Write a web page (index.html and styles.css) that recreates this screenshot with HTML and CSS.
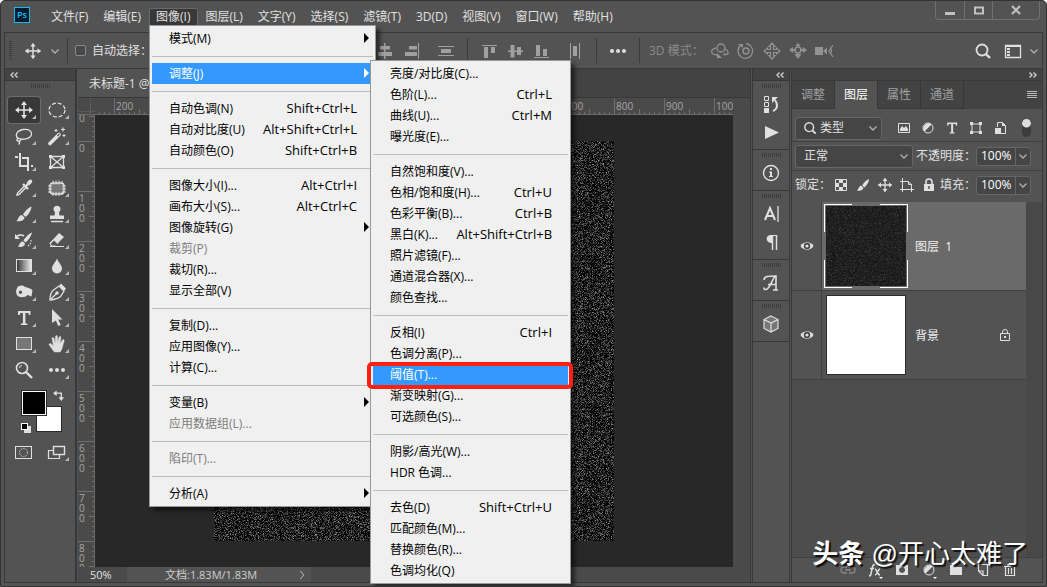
FILE: index.html
```html
<!DOCTYPE html>
<html lang="zh-CN">
<head>
  <meta charset="UTF-8" />
  <title>未标题-1</title>
  <link rel="stylesheet" href="styles.css">
</head>
<body>

  <!-- Icon sprite -->
  <svg class="sprite" aria-hidden="true">
    <symbol id="i-move" viewBox="0 0 20 20"><path d="M10 2v16M2 10h16" stroke="currentColor" stroke-width="1.6"/><path d="M10 1l3 4H7zM10 19l3-4H7zM1 10l4-3v6zM19 10l-4-3v6z" fill="currentColor"/></symbol>
    <symbol id="i-chev" viewBox="0 0 10 10"><path d="M1.500 3.500L5 7l3.500-3.500" fill="none" stroke="currentColor" stroke-width="1.300"/></symbol>
    <symbol id="i-marquee" viewBox="0 0 20 20"><ellipse cx="10" cy="10" rx="8" ry="7" fill="none" stroke="currentColor" stroke-width="1.3" stroke-dasharray="4 2"/></symbol>
    <symbol id="i-lasso" viewBox="0 0 20 20"><path d="M5.500 13C0 10.500 2 5 9 3.500c6-1 9 2 8.500 4.800C17 12 10 14.500 5 12.500c-2-.5-3 2-1 2.500s4-1 2-2.500M5 15c1 1 .5 2.500-.5 3.500" fill="none" stroke="currentColor" stroke-width="1.300"/></symbol>
    <symbol id="i-wand" viewBox="0 0 20 20"><path d="M3 17.500L12 8.500" stroke="currentColor" stroke-width="3.600" stroke-linecap="round"/><path d="M10.500 10l2-2" stroke="#535353" stroke-width="1.200"/><path d="M9 3v3M7.500 4.500h3M16 1.500v4M14 3.500h4M17 8v3M15.500 9.500h3" stroke="currentColor" stroke-width="1.100"/></symbol>
    <symbol id="i-crop" viewBox="0 0 20 20"><path d="M6 1v13h9M1 5h3M8 6h6v7M14 15v4M17 14h2" fill="none" stroke="currentColor" stroke-width="2"/></symbol>
    <symbol id="i-frame" viewBox="0 0 20 20"><path d="M3.500 4.500h13v11h-13zM3.500 4.500l13 11M16.500 4.500l-13 11" fill="none" stroke="currentColor" stroke-width="1.300"/><path d="M2 3h3v3H2zM15 3h3v3h-3zM2 14h3v3H2zM15 14h3v3h-3z" fill="currentColor"/></symbol>
    <symbol id="i-dropper" viewBox="0 0 20 20"><path d="M11 7.500l-7.500 7.500-.5 2 2-.5L12.500 9" fill="none" stroke="currentColor" stroke-width="1.400"/><path d="M9 6l5 5M12 8l4-4" stroke="currentColor" stroke-width="2.400"/><path d="M12.500 5l2.500-3c2-1.500 4 .5 3 2.500l-3 3z" fill="currentColor"/></symbol>
    <symbol id="i-patch" viewBox="0 0 20 20"><rect x="3" y="5" width="14" height="11" rx="3" fill="#777" stroke="currentColor" stroke-width="1.300"/><path d="M6 2.500v4M9 2.500v4M12 2.500v4M15 3v3M6 14v4M9 14v4M12 14v4M15 14v3M1 8h4M1 11h4M1 14h4M15 8h4M15 11h4M15 14h4" stroke="currentColor"/></symbol>
    <symbol id="i-brush" viewBox="0 0 20 20"><path d="M17.500 2.500c-3 1-7 5-8.500 8l2.500 2.500c3-2 6-7 6-10.500z" fill="currentColor"/><path d="M8 11c-3 0-3 3-5.500 6 3.500 1 8-.5 8-3.500z" fill="currentColor"/></symbol>
    <symbol id="i-stamp" viewBox="0 0 20 20"><path d="M8 8a3.500 3.500 0 1 1 4 0l.5 3.500H17v3.500H3v-3.500h4.500z" fill="currentColor"/><path d="M4 17.500h12" stroke="currentColor" stroke-width="1.500"/></symbol>
    <symbol id="i-history" viewBox="0 0 20 20"><path d="M18 2.500c-3 1-7 5-8.500 8l2 2c3-2 6-7 6.500-10zM9 11.500c-3 0-3 2.500-5 5 3 1 7 0 7-3z" fill="currentColor"/><path d="M2 8c1-3 5-4 8-2" fill="none" stroke="currentColor" stroke-width="1.600"/><path d="M1 4v5h5z" fill="currentColor"/><path d="M14 16c2-1 3-3 3-6" fill="none" stroke="currentColor" stroke-width="1.200" stroke-dasharray="1.300 1.500"/></symbol>
    <symbol id="i-eraser" viewBox="0 0 20 20"><path d="M12 3l5 4-9 9H4l-1.500-2.500z" fill="currentColor"/><path d="M7 9.500l4 4-2 2H5l-1.500-2z" fill="#535353"/><path d="M7 9.500l4 4M3 13.500l4-4M3 16.500h14" stroke="currentColor" stroke-width="1.200"/></symbol>
    <symbol id="i-grad" viewBox="0 0 20 20"><rect x="2.500" y="3.500" width="15" height="12" fill="url(#gradFill)" stroke="currentColor"/></symbol>
    <symbol id="i-drop" viewBox="0 0 20 20"><path d="M10 2.500c1 3.500 5 6.500 5 10a5 5 0 0 1-10 0c0-3.500 4-6.500 5-10z" fill="currentColor"/></symbol>
    <symbol id="i-dodge" viewBox="0 0 20 20"><path fill-rule="evenodd" d="M3 6c2-3 6-3 8-1 3 1 6 1 7.500 3.500l-1 6-4-1.500C11 16 5 16 3 13c-1.500-2-1-5 0-7zm3 2.500c-2 1-1 3.500.5 3.500S9.500 9 6 8.500z" fill="currentColor"/></symbol>
    <symbol id="i-pen" viewBox="0 0 20 20"><path d="M3 18c0-5 1-8 3.500-10L12 4l5 5-3.500 5.500C11 17 8 17.500 3 18zM4 17l5.500-5.500" fill="none" stroke="currentColor" stroke-width="1.300"/><circle cx="10" cy="11" r="1.700" fill="currentColor"/><path d="M12 4l2-2.500 5 5L17 9z" fill="currentColor"/></symbol>
    <symbol id="i-type" viewBox="0 0 20 20"><path d="M4 3h12.500v4h-1.600l-.6-2H11.400v10.300l2 .5V17H6.900v-1.200l2-.5V5H6.200l-.6 2H4z" fill="currentColor"/></symbol>
    <symbol id="i-arrow" viewBox="0 0 20 20"><path d="M5 1l10.500 10.500h-4.300l2.500 5.500-2.400 1-2.500-5.500L5 15z" fill="currentColor"/></symbol>
    <symbol id="i-rect" viewBox="0 0 20 20"><rect x="2.500" y="3.500" width="15" height="12" fill="#777" stroke="currentColor"/></symbol>
    <symbol id="i-hand" viewBox="0 0 20 20"><path d="M7.500 18C5.500 16 3.500 12.500 2 10.500c.5-1.500 2-1 3 .2L6.500 12 5 4.500c0-1.200 1.500-1.200 1.900 0L8.200 9.500 8.500 2.500c.2-1.300 1.800-1.300 1.900 0l.2 7 1.500-6.300c.4-1.200 2-1 1.800.4L13 10l2.500-4c.8-1 2-.2 1.600 1L15 14.500c-.5 1.500-1 2.500-2 3.500z" fill="currentColor" stroke="currentColor" stroke-width=".5"/></symbol>
    <symbol id="i-zoom" viewBox="0 0 20 20"><circle cx="8" cy="8" r="5.500" fill="none" stroke="currentColor" stroke-width="1.600"/><path d="M5.500 8a2.500 2.500 0 0 1 2.500-2.500" fill="none" stroke="currentColor"/><path d="M12 12l6 6" stroke="currentColor" stroke-width="2.400"/></symbol>
    <symbol id="i-dots" viewBox="0 0 20 20"><circle cx="4" cy="10" r="2" fill="currentColor"/><circle cx="10" cy="10" r="2" fill="currentColor"/><circle cx="16" cy="10" r="2" fill="currentColor"/></symbol>
    <symbol id="i-mask" viewBox="0 0 20 20"><rect x="1.500" y="4.500" width="16" height="12" fill="none" stroke="currentColor"/><circle cx="9.500" cy="10.500" r="4" fill="none" stroke="currentColor" stroke-dasharray="1.300 1.300"/></symbol>
    <symbol id="i-screens" viewBox="0 0 20 20"><path d="M6 8.500H1.500v8h11V13" fill="none" stroke="currentColor" stroke-width="1.200"/><rect x="6.500" y="4.500" width="11" height="8" fill="none" stroke="currentColor" stroke-width="1.400"/></symbol>
    <symbol id="i-swap" viewBox="0 0 12 12"><path d="M3 3.500h6V9" fill="none" stroke="currentColor" stroke-width="1.400"/><path d="M0 3.500L4 .5v6zM9 12L6 8h6z" fill="currentColor"/></symbol>
    <symbol id="i-alc" viewBox="0 0 20 20"><path d="M8 2h1.500v3H14v3.500H9.500V11H16v4H9.500v3H8v-3H2v-4h6V8.500H4V5h4z" fill="currentColor"/></symbol>
    <symbol id="i-alr" viewBox="0 0 20 20"><path d="M7 5h8v3.500H7zM3 11h12v4H3zM16 2h1v16h-1z" fill="currentColor"/></symbol>
    <symbol id="i-dist" viewBox="0 0 20 20"><path d="M2 5h16v1H2zM5 8h10v4H5zM2 14h16v1H2z" fill="currentColor"/></symbol>
    <symbol id="i-top" viewBox="0 0 20 20"><path d="M3 4h15v1H3zM5 6h4v11H5zM12 6h4v6h-4z" fill="currentColor"/></symbol>
    <symbol id="i-mid" viewBox="0 0 20 20"><path d="M3 9.500h2.500V4h4v5.500H12V6h4v3.500h2V11h-2v3h-4v-3H9.500v5.500h-4V11H3z" fill="currentColor"/></symbol>
    <symbol id="i-bot" viewBox="0 0 20 20"><path d="M5 4h4v11H5zM12 8h4v7h-4zM3 16h15v1H3z" fill="currentColor"/></symbol>
    <symbol id="i-disth" viewBox="0 0 20 20"><path d="M5 2h1v16H5zM8 5h4v10H8zM14 2h1v16h-1z" fill="currentColor"/></symbol>
    <symbol id="i-orbit" viewBox="0 0 20 20"><circle cx="11" cy="7" r="4" fill="none" stroke="currentColor" stroke-width="1.300"/><path d="M6 7c-4 1-5 3-4 5 1 1.500 3 2 6 2M15 8c4 2 4 5 1 5.500h-3" fill="none" stroke="currentColor" stroke-width="1.300"/><path d="M7 12v5h5z" fill="currentColor"/></symbol>
    <symbol id="i-roll" viewBox="0 0 20 20"><circle cx="10" cy="10" r="3" fill="none" stroke="currentColor" stroke-width="1.400"/><path d="M4.500 4.500A7.300 7.300 0 1 0 10 2.700" fill="none" stroke="currentColor" stroke-width="1.200"/><path d="M2 3h5v4z" fill="currentColor"/></symbol>
    <symbol id="i-pan" viewBox="0 0 20 20"><path d="M10 2l3 3.500h-1.500v3h3V7L18 10l-3.500 3v-1.500h-3v3H13L10 18l-3-3.500h1.500v-3h-3V13L2 10l3.500-3v1.500h3v-3H7z" fill="none" stroke="currentColor" stroke-width="1.200"/></symbol>
    <symbol id="i-slide" viewBox="0 0 20 20"><circle cx="10" cy="9" r="3" fill="none" stroke="currentColor" stroke-width="1.500"/><path d="M10 2l2.500 3h-5zM10 18l3.500-5h-7zM1 9l4-3v2h2v2H5v2zM19 9l-4-3v2h-2v2h2v2z" fill="currentColor"/></symbol>
    <symbol id="i-cam" viewBox="0 0 20 20"><path d="M1 6h8v8H1zM9 10l4-3.500v7z" fill="currentColor"/><path d="M19 4l-4 6 4 6M16 7c2 1 2 5 0 6" fill="none" stroke="currentColor" stroke-width="1.200"/></symbol>
    <symbol id="i-search" viewBox="0 0 20 20"><circle cx="9" cy="9" r="5.500" fill="none" stroke="currentColor" stroke-width="1.800"/><path d="M13 13l4 4" stroke="currentColor" stroke-width="2.400"/></symbol>
    <symbol id="i-work" viewBox="0 0 20 20"><path d="M2.500 4.500h15v12h-15z" fill="none" stroke="currentColor" stroke-width="1.300"/><path d="M2 4h16v2H2zM4 7h3v2H4zM4 10h3v2H4zM4 13h3v2H4z" fill="currentColor"/></symbol>
    <symbol id="i-hist" viewBox="0 0 20 20"><path d="M3.500 2.500h4v4h-4zM3.500 8.500h4v4h-4z" fill="none" stroke="currentColor"/><path d="M3 14h5v5H3z" fill="currentColor"/><path d="M12 17c5-2 5-7 2-11" fill="none" stroke="currentColor" stroke-width="2"/><path d="M11 9V3h6z" fill="currentColor"/></symbol>
    <symbol id="i-play" viewBox="0 0 20 20"><path d="M4 4l14 6.500L4 17z" fill="currentColor"/></symbol>
    <symbol id="i-info" viewBox="0 0 20 20"><circle cx="10" cy="10" r="7.500" fill="none" stroke="currentColor" stroke-width="1.400"/><path d="M9 5h2v2H9zM8 8.500h3V13h1v1H8v-1h1V9.500H8z" fill="currentColor"/></symbol>
    <symbol id="i-char" viewBox="0 0 20 20"><path d="M4 16L9 4l5 12M6 12h6" fill="none" stroke="currentColor" stroke-width="2"/><path d="M17 2v16" stroke="currentColor" stroke-width="1.300"/></symbol>
    <symbol id="i-para" viewBox="0 0 20 20"><path d="M16 3.500H9" stroke="currentColor"/><path d="M11 3v8C4 11 4 3 10 3z" fill="currentColor"/><path d="M11.500 3v15M15.500 3v15" stroke="currentColor" stroke-width="1.500"/></symbol>
    <symbol id="i-glyph" viewBox="0 0 20 20"><path d="M3 7c0-4 5-4 12-4v14M14.500 3C11 6 9 16 5 16.500c-2 .3-2-1-2-2M7 11.500h8M12 17h5" fill="none" stroke="currentColor" stroke-width="1.600"/></symbol>
    <symbol id="i-cube" viewBox="0 0 20 20"><path d="M10 2l7 3.500v9L10 18l-7-3.500v-9z" fill="#777"/><path d="M10 2l7 3.500v9L10 18l-7-3.500v-9zM3 5.500L10 9l7-3.500M10 9v9" fill="none" stroke="currentColor" stroke-width="1.200"/></symbol>
    <symbol id="i-image" viewBox="0 0 16 16"><path d="M2.500 3.500h11v9h-11z" fill="none" stroke="currentColor"/><path d="M4 11V9l2-3 2 2 2-2 2 3v2z" fill="currentColor"/></symbol>
    <symbol id="i-adj" viewBox="0 0 16 16"><circle cx="8" cy="8" r="5" fill="none" stroke="currentColor"/><path d="M11.500 4.500A5 5 0 0 0 4.500 11.500z" fill="currentColor"/></symbol>
    <symbol id="i-shape" viewBox="0 0 16 16"><path d="M4 4h8v8H4z" fill="none" stroke="currentColor"/><path d="M2 2h3v3H2zM11 2h3v3h-3zM2 11h3v3H2zM11 11h3v3h-3z" fill="currentColor"/></symbol>
    <symbol id="i-smart" viewBox="0 0 16 16"><path d="M5.500 7V2.500h5l3 3v8H9" fill="none" stroke="currentColor"/><path d="M3 8h6v6H3zM10 2v4h4z" fill="currentColor"/></symbol>
    <symbol id="i-checker" viewBox="0 0 16 16"><path d="M2.500 2.500h11v11h-11z" fill="none" stroke="currentColor"/><path d="M6 3h4v3H6zM3 6h3v4H3zM10 6h3v4h-3zM6 10h4v3H6z" fill="currentColor"/></symbol>
    <symbol id="i-board" viewBox="0 0 16 16"><path d="M3.500 1v14M1 4.500h8l3.500 3V15M1 12.500h14M9.500 4.500v3h3" fill="none" stroke="currentColor"/></symbol>
    <symbol id="i-lock" viewBox="0 0 16 16"><path d="M3 7h10v7H3z" fill="currentColor"/><path d="M5 7V5a3 3 0 0 1 6 0v2" fill="none" stroke="currentColor" stroke-width="1.600"/><path d="M8 9v3" stroke="#535353" stroke-width="1.500"/></symbol>
    <symbol id="i-lock2" viewBox="0 0 16 16"><path d="M3.500 6.500h9v7h-9zM5.500 6.500V5a2.500 2.500 0 0 1 5 0v1.500" fill="none" stroke="currentColor"/><path d="M7 9h2v2H7z" fill="currentColor"/></symbol>
    <symbol id="i-eye" viewBox="0 0 16 16"><path d="M1.500 8C4 3 12 3 14.500 8 12 13 4 13 1.500 8z" fill="currentColor"/><circle cx="8" cy="8" r="3.200" fill="#444"/><circle cx="8" cy="8" r="1.600" fill="currentColor"/></symbol>
    <symbol id="i-link" viewBox="0 0 16 16"><path d="M7 5H4a3 3 0 0 0 0 6h3M9 5h3a3 3 0 0 1 0 6H9M5 8h6" fill="none" stroke="currentColor" stroke-width="1.300"/></symbol>
    <symbol id="i-fx" viewBox="0 0 16 16"><path d="M2 14c2 0 2-2 3-7s1.500-4.500 3-4M3 6.500h4M8 7c2 0 2 6 5 6M13 7c-2 0-3 6-5 6" fill="none" stroke="currentColor" stroke-width="1.500"/></symbol>
    <symbol id="i-addmask" viewBox="0 0 16 16"><path fill-rule="evenodd" d="M2 3h12v10H2zm6 2a3 3 0 1 0 .1 0z" fill="currentColor"/></symbol>
    <symbol id="i-folder" viewBox="0 0 16 16"><path d="M2 3h5l1 2h6v8H2z" fill="currentColor"/></symbol>
    <symbol id="i-new" viewBox="0 0 16 16"><path d="M3.500 9V2.500h9v11H8zM3.500 9H8v4.500" fill="none" stroke="currentColor" stroke-width="1.200"/></symbol>
    <symbol id="i-trash" viewBox="0 0 16 16"><path d="M2 4.500h12M6 4V2.500h4V4M3.500 5v8.500h9V5M6.500 6v6M9.500 6v6" fill="none" stroke="currentColor" stroke-width="1.200"/></symbol>
    <linearGradient id="gradFill"><stop offset="0" stop-color="#333"/><stop offset="1" stop-color="#eee"/></linearGradient>
    <filter id="noise" x="0" y="0" width="100%" height="100%" color-interpolation-filters="sRGB">
      <feTurbulence type="fractalNoise" baseFrequency="1.37 1.73" numOctaves="3" seed="7"/>
      <feColorMatrix values="1.500 0 0 0 -0.640  1.500 0 0 0 -0.640  1.500 0 0 0 -0.640  0 0 0 0 1"/>
    </filter>
  </svg>

  <div class="app">

    <header class="titlebar">
      <div class="logo">Ps</div>
      <nav class="menubar">
        <button class="menu-btn">文件(F)</button>
        <button class="menu-btn">编辑(E)</button>
        <div class="menu-open">
          <button class="menu-btn active">图像(I)</button>

          <ul class="menu">
            <li class="item more">模式(M)</li>
            <li class="sep"></li>
            <li class="item more selected">调整(J)
              <ul class="menu submenu">
                <li class="item">亮度/对比度(C)...</li>
                <li class="item">色阶(L)...<kbd>Ctrl+L</kbd></li>
                <li class="item">曲线(U)...<kbd>Ctrl+M</kbd></li>
                <li class="item">曝光度(E)...</li>
                <li class="sep"></li>
                <li class="item">自然饱和度(V)...</li>
                <li class="item">色相/饱和度(H)...<kbd>Ctrl+U</kbd></li>
                <li class="item">色彩平衡(B)...<kbd>Ctrl+B</kbd></li>
                <li class="item">黑白(K)...<kbd>Alt+Shift+Ctrl+B</kbd></li>
                <li class="item">照片滤镜(F)...</li>
                <li class="item">通道混合器(X)...</li>
                <li class="item">颜色查找...</li>
                <li class="sep"></li>
                <li class="item">反相(I)<kbd>Ctrl+I</kbd></li>
                <li class="item">色调分离(P)...</li>
                <li class="item selected marked">阈值(T)...</li>
                <li class="item">渐变映射(G)...</li>
                <li class="item">可选颜色(S)...</li>
                <li class="sep"></li>
                <li class="item">阴影/高光(W)...</li>
                <li class="item">HDR 色调...</li>
                <li class="sep"></li>
                <li class="item">去色(D)<kbd>Shift+Ctrl+U</kbd></li>
                <li class="item">匹配颜色(M)...</li>
                <li class="item">替换颜色(R)...</li>
                <li class="item">色调均化(Q)</li>
              </ul>
            </li>
            <li class="sep"></li>
            <li class="item">自动色调(N)<kbd>Shift+Ctrl+L</kbd></li>
            <li class="item">自动对比度(U)<kbd>Alt+Shift+Ctrl+L</kbd></li>
            <li class="item">自动颜色(O)<kbd>Shift+Ctrl+B</kbd></li>
            <li class="sep"></li>
            <li class="item">图像大小(I)...<kbd>Alt+Ctrl+I</kbd></li>
            <li class="item">画布大小(S)...<kbd>Alt+Ctrl+C</kbd></li>
            <li class="item more">图像旋转(G)</li>
            <li class="item disabled">裁剪(P)</li>
            <li class="item">裁切(R)...</li>
            <li class="item">显示全部(V)</li>
            <li class="sep"></li>
            <li class="item">复制(D)...</li>
            <li class="item">应用图像(Y)...</li>
            <li class="item">计算(C)...</li>
            <li class="sep"></li>
            <li class="item more">变量(B)</li>
            <li class="item disabled">应用数据组(L)...</li>
            <li class="sep"></li>
            <li class="item disabled">陷印(T)...</li>
            <li class="sep"></li>
            <li class="item more">分析(A)</li>
          </ul>
        </div>
        <button class="menu-btn">图层(L)</button>
        <button class="menu-btn">文字(Y)</button>
        <button class="menu-btn">选择(S)</button>
        <button class="menu-btn">滤镜(T)</button>
        <button class="menu-btn">3D(D)</button>
        <button class="menu-btn">视图(V)</button>
        <button class="menu-btn">窗口(W)</button>
        <button class="menu-btn">帮助(H)</button>
      </nav>
      <div class="win-controls">
        <button aria-label="最小化"><svg viewBox="0 0 12 12"><path d="M1 8h10v3H1z" fill="currentColor"/></svg></button>
        <button aria-label="最大化"><svg viewBox="0 0 12 12"><path d="M2 3.500h8v6H2z" fill="none" stroke="currentColor" stroke-width="2"/></svg></button>
        <button class="close" aria-label="关闭"><svg viewBox="0 0 12 12"><path d="M2 2l8 8M10 2l-8 8" stroke="currentColor" stroke-width="2.200"/></svg></button>
      </div>
    </header>

    <div class="options">
      <div class="opt-left">
        <span class="grip-v"></span>
        <svg class="icon move"><use href="#i-move"/></svg>
        <svg class="chev"><use href="#i-chev"/></svg>
        <span class="divider"></span>
        <label class="auto"><input type="checkbox">自动选择：</label>
      </div>
      <div class="opt-align">
        <svg class="icon"><use href="#i-alc"/></svg>
        <svg class="icon"><use href="#i-alr"/></svg>
        <svg class="icon dist"><use href="#i-dist"/></svg>
      </div>
      <span class="divider"></span>
      <div class="opt-align">
        <svg class="icon"><use href="#i-top"/></svg>
        <svg class="icon"><use href="#i-mid"/></svg>
        <svg class="icon"><use href="#i-bot"/></svg>
        <svg class="icon dist"><use href="#i-disth"/></svg>
      </div>
      <span class="divider"></span>
      <button class="more-btn" aria-label="更多"><svg class="icon"><use href="#i-dots"/></svg></button>
      <span class="divider"></span>
      <span class="mode">3D 模式：</span>
      <div class="opt-3d">
        <svg class="icon"><use href="#i-orbit"/></svg>
        <svg class="icon"><use href="#i-roll"/></svg>
        <svg class="icon"><use href="#i-pan"/></svg>
        <svg class="icon"><use href="#i-slide"/></svg>
        <svg class="icon"><use href="#i-cam"/></svg>
      </div>
      <div class="opt-right">
        <svg class="icon"><use href="#i-search"/></svg>
        <div class="work-switch">
          <svg class="icon"><use href="#i-work"/></svg>
          <svg class="chev"><use href="#i-chev"/></svg>
        </div>
      </div>
    </div>

    <div class="workspace">

      <aside class="tools">
        <div class="dock-head"><svg viewBox="0 0 8 8"><path d="M3.500 1.500L1 4l2.500 2.500M7.500 1.500L5 4l2.500 2.500" /></svg></div>
        <span class="grip"></span>
        <div class="tool-grid">
          <button class="tool on"><svg class="icon"><use href="#i-move"/></svg></button>
          <button class="tool"><svg class="icon"><use href="#i-marquee"/></svg></button>
          <button class="tool"><svg class="icon"><use href="#i-lasso"/></svg></button>
          <button class="tool"><svg class="icon"><use href="#i-wand"/></svg></button>
          <button class="tool"><svg class="icon"><use href="#i-crop"/></svg></button>
          <button class="tool single"><svg class="icon"><use href="#i-frame"/></svg></button>
          <button class="tool"><svg class="icon"><use href="#i-dropper"/></svg></button>
          <button class="tool"><svg class="icon"><use href="#i-patch"/></svg></button>
          <button class="tool"><svg class="icon"><use href="#i-brush"/></svg></button>
          <button class="tool"><svg class="icon"><use href="#i-stamp"/></svg></button>
          <button class="tool"><svg class="icon"><use href="#i-history"/></svg></button>
          <button class="tool"><svg class="icon"><use href="#i-eraser"/></svg></button>
          <button class="tool"><svg class="icon"><use href="#i-grad"/></svg></button>
          <button class="tool"><svg class="icon"><use href="#i-drop"/></svg></button>
          <button class="tool"><svg class="icon"><use href="#i-dodge"/></svg></button>
          <button class="tool"><svg class="icon"><use href="#i-pen"/></svg></button>
          <button class="tool"><svg class="icon"><use href="#i-type"/></svg></button>
          <button class="tool"><svg class="icon"><use href="#i-arrow"/></svg></button>
          <button class="tool"><svg class="icon"><use href="#i-rect"/></svg></button>
          <button class="tool"><svg class="icon"><use href="#i-hand"/></svg></button>
          <button class="tool single"><svg class="icon"><use href="#i-zoom"/></svg></button>
          <button class="tool"><svg class="icon"><use href="#i-dots"/></svg></button>
        </div>
        <div class="colors">
          <span class="swatch back"></span>
          <span class="swatch front"></span>
          <svg class="swap"><use href="#i-swap"/></svg>
          <span class="reset"></span>
        </div>
        <div class="tool-grid">
          <button class="tool single"><svg class="icon"><use href="#i-mask"/></svg></button>
          <button class="tool"><svg class="icon"><use href="#i-screens"/></svg></button>
        </div>
      </aside>

      <main class="document">
        <div class="doc-tabs"><div class="doc-tab">未标题-1 @ 50% (图层 1, RGB/8#) *</div></div>
        <div class="doc-body">
          <div class="ruler-corner"></div>
          <svg class="ruler-x" id="rulerX"></svg>
          <svg class="ruler-y" id="rulerY"></svg>
          <div class="canvas">
            <svg class="artwork"><rect width="100%" height="100%" filter="url(#noise)"/></svg>
          </div>
        </div>
        <div class="status">
          <span class="zoom">50%</span>
          <span class="info">文档:1.83M/1.83M<svg viewBox="0 0 8 12"><path d="M2 1l4 5-4 5" fill="none" stroke="currentColor"/></svg></span>
        </div>
      </main>

      <aside class="dock">
        <div class="dock-head right"><svg viewBox="0 0 8 8"><path d="M3.500 1.500L1 4l2.500 2.500M7.500 1.500L5 4l2.500 2.500" /></svg></div>
        <div class="dock-group">
          <span class="grip"></span>
          <svg class="icon"><use href="#i-hist"/></svg>
          <svg class="icon"><use href="#i-play"/></svg>
        </div>
        <div class="dock-group">
          <span class="grip"></span>
          <svg class="icon"><use href="#i-info"/></svg>
        </div>
        <div class="dock-group">
          <span class="grip"></span>
          <svg class="icon"><use href="#i-char"/></svg>
          <svg class="icon"><use href="#i-para"/></svg>
        </div>
        <div class="dock-group">
          <span class="grip"></span>
          <svg class="icon"><use href="#i-glyph"/></svg>
        </div>
        <div class="dock-group">
          <span class="grip"></span>
          <svg class="icon"><use href="#i-cube"/></svg>
        </div>
      </aside>

      <aside class="panel">
        <div class="dock-head right"><svg viewBox="0 0 8 8"><path d="M.5 1.500L3 4 .5 6.500M4.500 1.500L7 4 4.500 6.500" /></svg></div>
        <div class="tabs">
          <button class="tab">调整</button>
          <button class="tab active">图层</button>
          <button class="tab">属性</button>
          <button class="tab">通道</button>
          <svg class="burger" viewBox="0 0 10 8"><path d="M0 .5h10M0 2.500h10M0 4.500h10M0 6.500h10" stroke="currentColor"/></svg>
        </div>

        <div class="row filter">
          <div class="select kind">
            <svg class="sicon"><use href="#i-search"/></svg>
            <select aria-label="类型"><option>类型</option></select>
            <svg class="chev"><use href="#i-chev"/></svg>
          </div>
          <div class="icons">
            <svg class="sicon"><use href="#i-image"/></svg>
            <svg class="sicon"><use href="#i-adj"/></svg>
            <svg class="sicon"><use href="#i-type"/></svg>
            <svg class="sicon"><use href="#i-shape"/></svg>
            <svg class="sicon"><use href="#i-smart"/></svg>
          </div>
          <span class="toggle"></span>
        </div>

        <div class="row">
          <div class="select blend">
            <select aria-label="混合模式"><option>正常</option></select>
            <svg class="chev"><use href="#i-chev"/></svg>
          </div>
          <label class="field" for="opacity">不透明度：</label>
          <div class="number"><input id="opacity" type="text" value="100%"><span><svg class="chev"><use href="#i-chev"/></svg></span></div>
        </div>

        <div class="row last">
          <span class="lock-label">锁定：</span>
          <div class="icons locks">
            <svg class="sicon"><use href="#i-checker"/></svg>
            <svg class="sicon"><use href="#i-brush"/></svg>
            <svg class="sicon"><use href="#i-move"/></svg>
            <svg class="sicon"><use href="#i-board"/></svg>
            <svg class="sicon"><use href="#i-lock"/></svg>
          </div>
          <label class="field" for="fill">填充：</label>
          <div class="number"><input id="fill" type="text" value="100%"><span><svg class="chev"><use href="#i-chev"/></svg></span></div>
        </div>

        <div class="layers">
          <div class="layer current">
            <div class="eye"><svg class="sicon"><use href="#i-eye"/></svg></div>
            <div class="layer-body">
              <div class="thumb framed"><svg><rect width="100%" height="100%" filter="url(#noise)"/></svg></div>
              <span class="name">图层&nbsp; 1</span>
            </div>
          </div>
          <div class="layer">
            <div class="eye"><svg class="sicon"><use href="#i-eye"/></svg></div>
            <div class="layer-body">
              <div class="thumb white"></div>
              <span class="name">背景</span>
              <svg class="sicon locked"><use href="#i-lock2"/></svg>
            </div>
          </div>
        </div>

        <div class="panel-foot">
          <span class="dim"><svg class="sicon"><use href="#i-link"/></svg></span>
          <span class="drop"><svg class="sicon"><use href="#i-fx"/></svg></span>
          <span><svg class="sicon"><use href="#i-addmask"/></svg></span>
          <span class="drop"><svg class="sicon"><use href="#i-adj"/></svg></span>
          <span><svg class="sicon"><use href="#i-folder"/></svg></span>
          <span><svg class="sicon"><use href="#i-new"/></svg></span>
          <span><svg class="sicon"><use href="#i-trash"/></svg></span>
        </div>
      </aside>
    </div>

    <div class="watermark"><b>头条</b> @开心太难了</div>
  </div>

  <script>
    const NS = 'http://www.w3.org/2000/svg';
    const art = document.querySelector('.artwork');
    const rulerX = document.getElementById('rulerX');
    const rulerY = document.getElementById('rulerY');

    function line(svg, x1, y1, x2, y2) {
      const el = document.createElementNS(NS, 'line');
      el.setAttribute('x1', x1);
      el.setAttribute('y1', y1);
      el.setAttribute('x2', x2);
      el.setAttribute('y2', y2);
      svg.appendChild(el);
    }

    function label(svg, x, y, text) {
      const el = document.createElementNS(NS, 'text');
      el.setAttribute('x', x);
      el.setAttribute('y', y);
      el.textContent = text;
      svg.appendChild(el);
    }

    // One tick per 5px, a label every 50px (100 image pixels at 50% zoom)
    function drawRulers() {
      const box = art.getBoundingClientRect();
      const rx = rulerX.getBoundingClientRect();
      const ry = rulerY.getBoundingClientRect();
      rulerX.replaceChildren();
      rulerY.replaceChildren();

      for (let i = -60; i < 400; i++) {
        const x = Math.round(box.left - rx.left) + i * 5;
        const y = Math.round(box.top - ry.top) + i * 5;
        const major = i % 10 === 0;
        const size = major ? 17 : i % 5 === 0 ? 6 : 3;

        if (x > 0 && x < rx.width) {
          line(rulerX, x + 0.5, 17 - size, x + 0.5, 17);
          if (major) label(rulerX, x + 2, 12, Math.abs(i * 10));
        }
        if (y > -40 && y < ry.height) {
          line(rulerY, 17 - size, y + 0.5, 17, y + 0.5);
          if (major) {
            String(Math.abs(i * 10)).split('').forEach((digit, n) => {
              const base = y + 11 + n * 10;
              if (base > 6) label(rulerY, 1, base, digit);
            });
          }
        }
      }
    }

    drawRulers();
    window.addEventListener('resize', drawRulers);
  </script>

</body>
</html>
```

FILE: styles.css
```css
* {
  box-sizing: border-box;
}

body {
  margin: 0;
  background: #fff;
  color: #e0e0e0;
  font-family: "Open Sans", "Noto Sans CJK SC", sans-serif;
  font-size: 12px;
  line-height: 16px;
}

button,
input,
select {
  font: inherit;
  color: inherit;
  background: none;
  border: none;
  padding: 0;
  margin: 0;
}

svg {
  display: block;
  flex-shrink: 0;
}

.sprite {
  position: absolute;
  width: 0;
  height: 0;
}

.app {
  position: relative;
  display: flex;
  flex-direction: column;
  min-height: 100vh;
  background: #535353;
  border: 1px solid #333;
  border-radius: 5px 5px 0 0;
  padding: 0 3px 3px;
  overflow: hidden;
}

.icon {
  width: 20px;
  height: 20px;
}

.sicon {
  width: 16px;
  height: 16px;
}

.chev {
  width: 10px;
  height: 10px;
  color: #b0b0b0;
}

.divider {
  width: 1px;
  height: 25px;
  background: #3c3c3c;
}

/* Title bar and menus */
.titlebar {
  display: flex;
  align-items: flex-start;
  height: 31px;
}

.logo {
  width: 16px;
  height: 16px;
  margin: 6px 14px 0 10px;
  background: #001e2b;
  border: 1px solid #18b9f0;
  color: #18b9f0;
  font-size: 9px;
  font-weight: 600;
  line-height: 13px;
  text-align: center;
}

.menubar {
  display: flex;
  padding-top: 7px;
}

.menu-btn {
  height: 18px;
  padding: 0 7px 0 6px;
  border: 1px solid transparent;
  border-radius: 2px 2px 0 0;
  line-height: 16px;
  white-space: nowrap;
}

.menu-btn.active {
  background: #383838;
  border-color: #6a6a6a;
}

.menu-open {
  position: relative;
}

.menu {
  position: absolute;
  z-index: 10;
  top: 17px;
  left: 0;
  width: 227px;
  margin: 0;
  padding: 2px;
  list-style: none;
  color: #000;
  background: #f0f0f0;
  border: 1px solid #999;
  box-shadow: 4px 4px 4px rgba(0, 0, 0, 0.5);
}

.submenu {
  top: -3px;
  left: 218px;
  width: 201px;
}

.item {
  position: relative;
  display: flex;
  justify-content: space-between;
  height: 21px;
  padding: 0 16px 0 17px;
  line-height: 22px;
  white-space: nowrap;
}

.item kbd {
  font-family: inherit;
  font-size: 13px;
  line-height: 20px;
}

.item.disabled {
  color: #7d7d7d;
}

.item.selected {
  color: #fff;
  background: #3399ff;
}

.item.selected .item:not(.selected) {
  color: #000;
}

.item.more::after {
  content: "";
  position: absolute;
  right: 4px;
  top: 5px;
  border: 5px solid transparent;
  border-left-color: currentColor;
  border-right-width: 0;
}

.item.marked::after {
  content: "";
  position: absolute;
  inset: -2px -5px -4px -6px;
  border: 4px solid #ff2010;
  border-radius: 5px;
}

.sep {
  height: 14px;
  padding-top: 7px;
}

.sep::before {
  content: "";
  display: block;
  height: 1px;
  background: #bdbdbd;
}

.win-controls {
  display: flex;
  margin: 0 3px 0 auto;
  border: 1px solid #707070;
  border-top: none;
  border-radius: 0 0 4px 4px;
  color: #c0c0c0;
}

.win-controls button {
  display: flex;
  align-items: center;
  justify-content: center;
  width: 28px;
  height: 18px;
}

.win-controls button + button {
  border-left: 1px solid #707070;
}

.win-controls .close {
  width: 47px;
}

.win-controls svg {
  width: 12px;
  height: 12px;
}

/* Options bar */
.options {
  display: flex;
  align-items: center;
  height: 37px;
  border: 1px solid #383838;
}

.options .divider {
  flex-shrink: 0;
}

.opt-left {
  display: flex;
  align-items: center;
  width: 371px;
  padding-left: 4px;
}

.grip-v {
  width: 3px;
  height: 20px;
  background: repeating-linear-gradient(#3e3e3e 0 1px, transparent 1px 2px);
}

.opt-left .move {
  width: 18px;
  height: 18px;
  margin: 0 8px 0 12px;
}

.opt-left .divider {
  margin: 0 7px;
}

.auto {
  display: flex;
  align-items: center;
  gap: 6px;
  white-space: nowrap;
}

.auto input {
  appearance: none;
  width: 11px;
  height: 11px;
  border: 1px solid #8a8a8a;
  border-radius: 2px;
  background: #484848;
}

.opt-align {
  display: flex;
  gap: 6px;
  padding: 0 11px 0 0;
  color: #a0a0a0;
}

.opt-align .dist {
  margin-left: 8px;
}

.divider + .opt-align {
  padding-left: 11px;
}

.more-btn {
  margin: 0 11px;
}

.mode {
  margin-left: 9px;
  width: 61px;
  color: #8a8a8a;
  white-space: nowrap;
}

.opt-3d {
  display: flex;
  gap: 6px;
  color: #929292;
}

.opt-right {
  display: flex;
  align-items: center;
  gap: 10px;
  margin: 0 3px 0 auto;
}

.work-switch {
  display: flex;
  align-items: center;
  gap: 6px;
}

/* Workspace */
.workspace {
  display: grid;
  grid-template-columns: 72px minmax(0, 1fr) 38px 251px;
  gap: 1px;
  flex: 1;
  border: 1px solid #383838;
  border-top: none;
}

.dock-head {
  display: flex;
  align-items: center;
  height: 12px;
  padding: 0 5px;
  background: #434343;
  border-bottom: 1px solid #383838;
}

.dock-head.right {
  justify-content: flex-end;
}

.dock-head svg {
  width: 8px;
  height: 8px;
  fill: none;
  stroke: #d0d0d0;
  stroke-width: 1.4;
}

.grip {
  display: block;
  width: 19px;
  height: 4px;
  margin: 3px auto 2px;
  background: repeating-linear-gradient(90deg, #3e3e3e 0 1px, transparent 1px 2px);
}

.tools {
  border-right: 2px solid #383838;
}

.tools .grip {
  margin-bottom: 9px;
}

.tool-grid {
  display: grid;
  grid-template-columns: 32px 32px;
  gap: 0 1px;
  padding-left: 3px;
}

.tool {
  position: relative;
  display: flex;
  align-items: center;
  justify-content: center;
  height: 26px;
  border-radius: 3px;
}

.tool.on {
  background: #383838;
  box-shadow: 0 0 0 1px #6b6b6b;
}

.tool::after {
  content: "";
  position: absolute;
  right: 4px;
  bottom: 4px;
  border: 2px solid transparent;
  border-right-color: #b8b8b8;
  border-bottom-color: #b8b8b8;
}

.tool.single::after {
  display: none;
}

.colors {
  position: relative;
  height: 56px;
}

.swatch {
  position: absolute;
  width: 26px;
  height: 26px;
  border: 1px solid #2a2a2a;
  box-shadow: inset 0 0 0 1px #fff;
}

.swatch.front {
  left: 16px;
  top: 7px;
  background: #000;
}

.swatch.back {
  left: 31px;
  top: 23px;
  background: #fff;
}

.swap {
  position: absolute;
  left: 48px;
  top: 7px;
  width: 11px;
  height: 11px;
}

.reset {
  position: absolute;
  left: 16px;
  top: 40px;
  width: 7px;
  height: 7px;
  background: #000;
  border: 1px solid #fff;
  box-shadow: 3px 3px 0 #ddd;
}

/* Document */
.document {
  display: flex;
  flex-direction: column;
  border-right: 1px solid #383838;
}

.doc-tabs {
  display: flex;
  height: 29px;
  background: #434343;
  border-bottom: 1px solid #383838;
}

.doc-tab {
  padding: 0 11px;
  background: #535353;
  line-height: 30px;
  white-space: nowrap;
}

.doc-body {
  display: grid;
  grid-template-columns: 17px 1fr 17px;
  grid-template-rows: 17px 1fr;
  flex: 1;
  background: #4a4a4a;
}

.ruler-corner {
  background:
    repeating-linear-gradient(90deg, #6a6a6a 0 1px, transparent 1px 2px) 0 13px / 100% 1px no-repeat,
    repeating-linear-gradient(#6a6a6a 0 1px, transparent 1px 2px) 12px 0 / 1px 100% no-repeat;
}

.ruler-corner,
.ruler-x {
  border-bottom: 1px solid #6a6a6a;
}

.ruler-x,
.ruler-y {
  width: 100%;
  height: 100%;
  overflow: hidden;
}

.ruler-y {
  grid-row: 2;
  border-right: 1px solid #6a6a6a;
}

.ruler-x line,
.ruler-y line {
  stroke: #6e6e6e;
}

.ruler-x text,
.ruler-y text {
  fill: #a6a6a6;
  font-size: 10px;
}

.canvas {
  grid-area: 2 / 2;
  display: flex;
  align-items: center;
  justify-content: center;
  background: #282828;
}

.artwork {
  width: 400px;
  height: 400px;
}

.status {
  display: flex;
  height: 15px;
  background: #4a4a4a;
  line-height: 15px;
  font-size: 11px;
}

.status .zoom {
  width: 49px;
  padding-left: 12px;
}

.status .info {
  display: flex;
  align-items: center;
  justify-content: space-between;
  width: 184px;
  padding: 0 5px 0 38px;
  background: #535353;
  color: #cfcfcf;
}

.status svg {
  width: 8px;
  height: 10px;
}

/* Icon dock */
.dock {
  border-left: 1px solid #383838;
  border-right: 1px solid #383838;
}

.dock-group {
  display: flex;
  flex-direction: column;
  align-items: center;
  padding-bottom: 3px;
  border-bottom: 1px solid #383838;
}

.dock-group .icon {
  margin: 4px 0;
}

/* Layers panel */
.panel {
  display: flex;
  flex-direction: column;
  border-left: 1px solid #383838;
}

.tabs {
  display: flex;
  height: 28px;
  background: #434343;
}

.tab {
  width: 43px;
  border-right: 1px solid #383838;
  border-bottom: 1px solid #383838;
  color: #a0a0a0;
}

.tab.active {
  background: #535353;
  border-bottom-color: #535353;
  color: #fff;
}

.burger {
  width: 10px;
  height: 8px;
  margin: 10px 5px 0 auto;
  color: #b8b8b8;
}

.row {
  display: flex;
  align-items: center;
  height: 29px;
  padding: 0 11px 0 3px;
  border-bottom: 1px solid #404040;
}

.row.filter {
  height: 33px;
  padding-top: 6px;
}

.row.last {
  height: 31px;
  padding-bottom: 3px;
  border-bottom: none;
}

.select {
  display: flex;
  align-items: center;
  height: 23px;
  padding: 0 3px 0 6px;
  background: #454545;
  border: 1px solid #666;
  border-radius: 3px;
}

.select select {
  flex: 1;
  appearance: none;
  outline: none;
}

.select.kind {
  width: 87px;
  gap: 2px;
}

.select.blend {
  width: 118px;
  padding-left: 8px;
}

.icons {
  display: flex;
  gap: 8px;
  margin-left: 14px;
}

.icons.locks {
  gap: 6px;
  margin-left: 2px;
}

.toggle {
  width: 9px;
  height: 18px;
  margin-left: auto;
  border-radius: 5px;
  background: radial-gradient(circle at 50% 4px, #dcdcdc 4px, transparent 5px) #3c3c3c;
}

.field {
  flex: 1;
  text-align: right;
  white-space: nowrap;
}

.lock-label {
  width: 36px;
  white-space: nowrap;
}

.number {
  display: flex;
  height: 19px;
  background: #454545;
  border: 1px solid #666;
  border-radius: 3px;
}

.number input {
  width: 38px;
  padding-left: 4px;
  color: #fff;
}

.number span {
  display: flex;
  align-items: center;
  width: 15px;
  padding-left: 2px;
  border-left: 1px solid #666;
}

.layers {
  flex: 1;
  padding-right: 16px;
  background: linear-gradient(270deg, #484848 16px, #4d4d4d 16px);
}

.layer {
  display: flex;
  height: 89px;
  background: #535353;
  border-bottom: 1px solid #404040;
}

.eye {
  display: flex;
  align-items: center;
  justify-content: center;
  width: 30px;
  border-right: 1px solid #404040;
}

.layer-body {
  display: flex;
  flex: 1;
  align-items: center;
  gap: 7px;
  padding: 0 13px 0 2px;
}

.layer.current .layer-body {
  background: #6a6a6a;
}

.thumb {
  width: 84px;
  height: 84px;
  padding: 2px;
}

.thumb svg {
  width: 80px;
  height: 80px;
  opacity: 0.25;
}

/* White brackets round the corners of the selected thumbnail */
.thumb.framed {
  background:
    linear-gradient(#202020, #202020) center / 80px 80px no-repeat,
    linear-gradient(90deg, #fff 28px, transparent 28px 56px, #fff 56px) top / 100% 1px no-repeat,
    linear-gradient(90deg, #fff 28px, transparent 28px 56px, #fff 56px) bottom / 100% 1px no-repeat,
    linear-gradient(#fff 28px, transparent 28px 56px, #fff 56px) left / 1px 100% no-repeat,
    linear-gradient(#fff 28px, transparent 28px 56px, #fff 56px) right / 1px 100% no-repeat;
}

.thumb.white {
  background: linear-gradient(#fff, #fff) center / 78px 78px no-repeat, linear-gradient(#2c2c2c, #2c2c2c) center / 80px 80px no-repeat;
}

.name {
  color: #f0f0f0;
  line-height: 18px;
  padding-top: 2px;
}

.locked {
  margin-left: auto;
}

.panel-foot {
  display: flex;
  gap: 11px;
  height: 25px;
  padding: 4px 0 0 48px;
  border-top: 1px solid #404040;
}

.panel-foot span {
  position: relative;
}

.panel-foot .dim {
  color: #888;
}

.panel-foot .drop::after {
  content: "";
  position: absolute;
  right: 0;
  top: 15px;
  border: 2px solid transparent;
  border-top-color: #fff;
}

.watermark {
  position: absolute;
  right: 18px;
  bottom: 14px;
  color: #fff;
  font-family: "Liberation Sans", "Noto Sans CJK SC", sans-serif;
  font-size: 26px;
  line-height: 36px;
  text-shadow: 2px 2px 1px #111;
  white-space: nowrap;
}
```
